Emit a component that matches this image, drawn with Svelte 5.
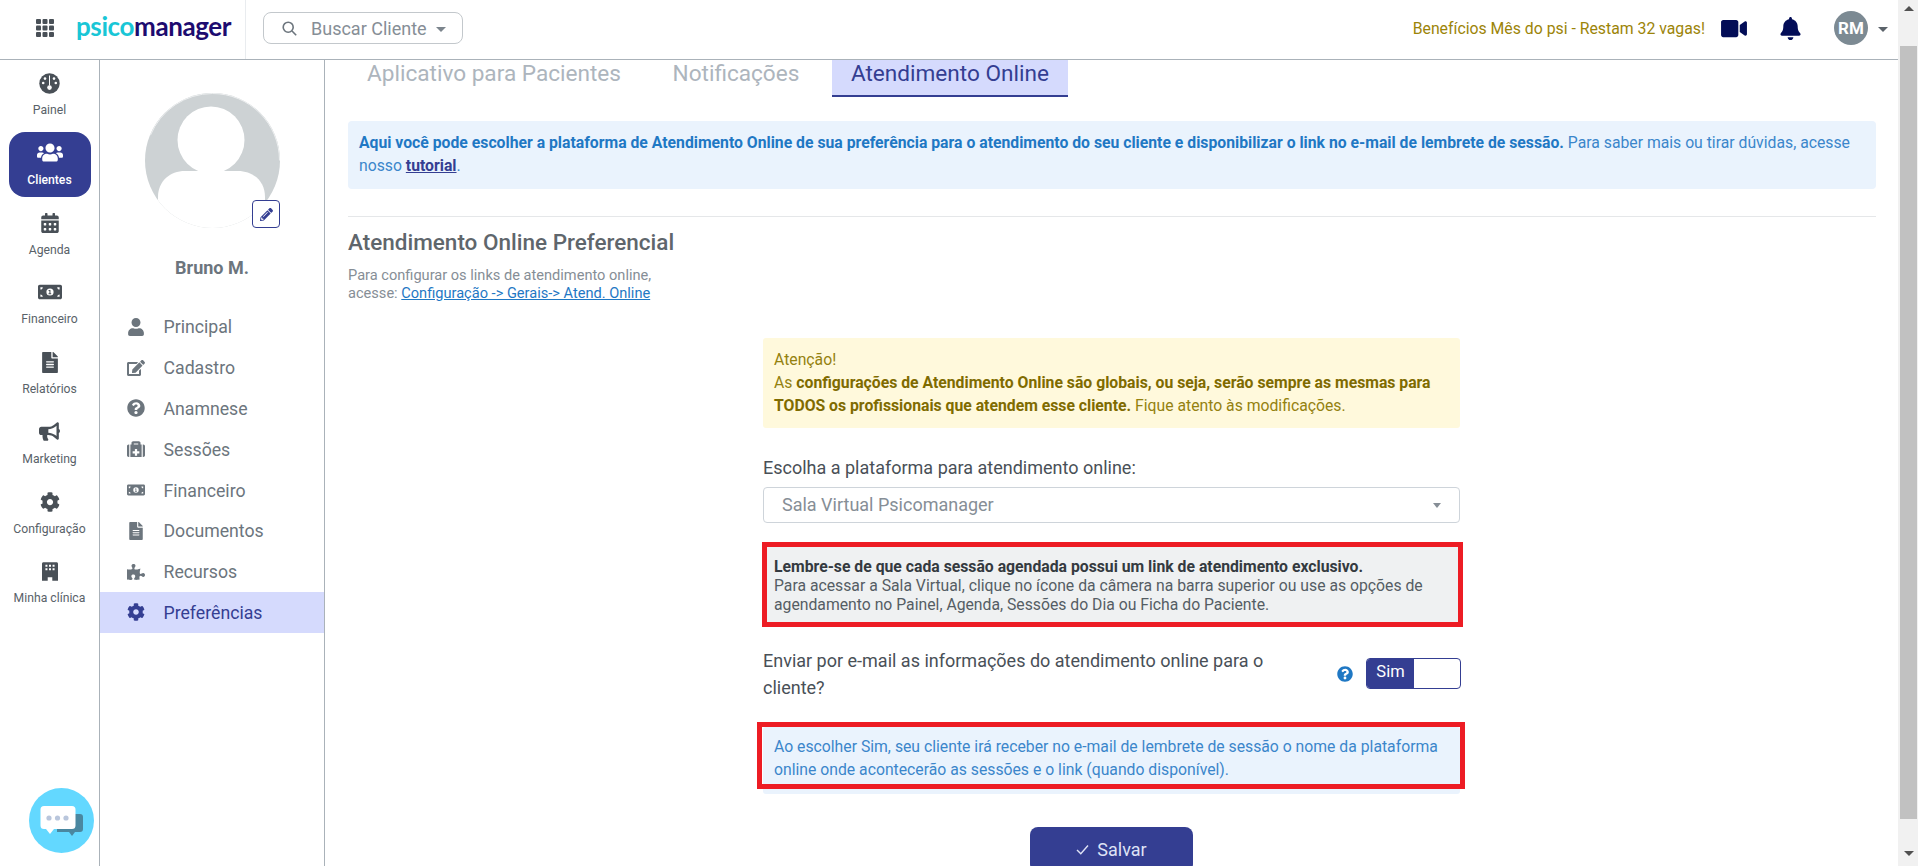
<script>
  const icons = {
    users: ['0 0 640 512', 'M96 224c35.3 0 64-28.7 64-64s-28.7-64-64-64-64 28.7-64 64 28.7 64 64 64zm448 0c35.3 0 64-28.7 64-64s-28.7-64-64-64-64 28.7-64 64 28.7 64 64 64zm32 32h-64c-17.6 0-33.5 7.1-45.1 18.6 40.3 22.1 68.9 62 75.1 109.4h66c17.7 0 32-14.3 32-32v-32c0-35.3-28.7-64-64-64zm-256 0c61.9 0 112-50.1 112-112S381.9 32 320 32 208 82.1 208 144s50.1 112 112 112zm76.8 32h-8.3c-20.8 10-43.9 16-68.5 16s-47.6-6-68.5-16h-8.3C179.6 288 128 339.6 128 403.2V432c0 26.5 21.5 48 48 48h288c26.5 0 48-21.5 48-48v-28.8c0-63.6-51.6-115.2-115.2-115.2zm-223.7-13.4C161.5 263.1 145.6 256 128 256H64c-35.3 0-64 28.7-64 64v32c0 17.7 14.3 32 32 32h65.9c6.3-47.4 34.9-87.3 75.2-109.4z'],
    calendar: ['0 0 448 512', 'M0 464c0 26.5 21.5 48 48 48h352c26.5 0 48-21.5 48-48V192H0v272zm320-196c0-6.6 5.4-12 12-12h40c6.6 0 12 5.4 12 12v40c0 6.6-5.4 12-12 12h-40c-6.6 0-12-5.4-12-12v-40zm0 128c0-6.6 5.4-12 12-12h40c6.6 0 12 5.4 12 12v40c0 6.6-5.4 12-12 12h-40c-6.6 0-12-5.4-12-12v-40zM192 268c0-6.6 5.4-12 12-12h40c6.6 0 12 5.4 12 12v40c0 6.6-5.4 12-12 12h-40c-6.6 0-12-5.4-12-12v-40zm0 128c0-6.6 5.4-12 12-12h40c6.6 0 12 5.4 12 12v40c0 6.6-5.4 12-12 12h-40c-6.6 0-12-5.4-12-12v-40zM64 268c0-6.6 5.4-12 12-12h40c6.6 0 12 5.4 12 12v40c0 6.6-5.4 12-12 12H76c-6.6 0-12-5.4-12-12v-40zm0 128c0-6.6 5.4-12 12-12h40c6.6 0 12 5.4 12 12v40c0 6.6-5.4 12-12 12H76c-6.6 0-12-5.4-12-12v-40zM400 64h-48V16c0-8.8-7.2-16-16-16h-32c-8.8 0-16 7.2-16 16v48H160V16c0-8.8-7.2-16-16-16h-32c-8.8 0-16 7.2-16 16v48H48C21.5 64 0 85.5 0 112v48h448v-48c0-26.5-21.5-48-48-48z'],
    file: ['0 0 384 512', 'M224 136V0H24C10.7 0 0 10.7 0 24v464c0 13.3 10.7 24 24 24h336c13.3 0 24-10.7 24-24V160H248c-13.2 0-24-10.8-24-24zm64 236c0 6.6-5.4 12-12 12H108c-6.6 0-12-5.4-12-12v-8c0-6.6 5.4-12 12-12h168c6.6 0 12 5.4 12 12v8zm0-64c0 6.6-5.4 12-12 12H108c-6.6 0-12-5.4-12-12v-8c0-6.6 5.4-12 12-12h168c6.6 0 12 5.4 12 12v8zm0-72v8c0 6.6-5.4 12-12 12H108c-6.6 0-12-5.4-12-12v-8c0-6.6 5.4-12 12-12h168c6.6 0 12 5.4 12 12zm96-114.1v6.1H256V0h6.1c6.4 0 12.5 2.5 17 7l97.9 98c4.5 4.5 7 10.6 7 16.9z'],
    cog: ['0 0 512 512', 'M487.4 315.7l-42.6-24.6c4.3-23.2 4.3-47 0-70.2l42.6-24.6c4.9-2.8 7.1-8.6 5.5-14-11.1-35.6-30-67.8-54.7-94.6-3.8-4.1-10-5.1-14.8-2.3L380.8 110c-17.9-15.4-38.5-27.3-60.8-35.1V25.8c0-5.6-3.9-10.5-9.4-11.7-36.7-8.2-74.3-7.8-109.2 0-5.5 1.2-9.4 6.1-9.4 11.7V75c-22.2 7.9-42.8 19.8-60.8 35.1L88.7 85.5c-4.9-2.8-11-1.9-14.8 2.3-24.7 26.7-43.6 58.9-54.7 94.6-1.7 5.4.6 11.2 5.5 14L67.3 221c-4.3 23.2-4.3 47 0 70.2l-42.6 24.6c-4.9 2.8-7.1 8.6-5.5 14 11.1 35.6 30 67.8 54.7 94.6 3.8 4.1 10 5.1 14.8 2.3l42.6-24.6c17.9 15.4 38.5 27.3 60.8 35.1v49.2c0 5.6 3.9 10.5 9.4 11.7 36.7 8.2 74.3 7.8 109.2 0 5.5-1.2 9.4-6.1 9.4-11.7v-49.2c22.2-7.9 42.8-19.8 60.8-35.1l42.6 24.6c4.9 2.8 11 1.9 14.8-2.3 24.7-26.7 43.6-58.9 54.7-94.6 1.5-5.5-.7-11.3-5.6-14.1zM256 336c-44.1 0-80-35.9-80-80s35.9-80 80-80 80 35.9 80 80-35.9 80-80 80z'],
    bullhorn: ['0 0 576 512', 'M576 240c0-23.63-12.95-44.04-32-55.12V32.01C544 23.26 537.02 0 512 0c-7.12 0-14.19 2.38-19.98 7.02l-85.03 68.03C364.28 109.19 310.66 128 256 128H64c-35.35 0-64 28.65-64 64v96c0 35.35 28.65 64 64 64h33.7c-1.39 10.48-2.18 21.14-2.18 32 0 39.77 9.26 77.35 25.56 110.94 5.19 10.69 16.52 17.06 28.4 17.06h74.28c26.05 0 41.69-29.84 25.9-50.56-16.4-21.52-26.15-48.36-26.15-77.44 0-11.11 1.62-21.79 4.41-32H256c54.66 0 108.28 18.81 150.98 52.95l85.03 68.03a32.023 32.023 0 0 0 19.98 7.02c24.92 0 32-22.78 32-32V295.13C563.05 284.04 576 263.63 576 240zm-96 141.42l-33.05-26.44C392.95 311.78 325.12 288 256 288v-96c69.12 0 136.95-23.78 190.95-66.98L480 98.58v282.84z'],
    user: ['0 0 448 512', 'M224 256c70.7 0 128-57.3 128-128S294.7 0 224 0 96 57.3 96 128s57.3 128 128 128zm89.6 32h-16.7c-22.2 10.2-46.9 16-72.9 16s-50.6-5.8-72.9-16h-16.7C60.2 288 0 348.2 0 422.4V464c0 26.5 21.5 48 48 48h352c26.5 0 48-21.5 48-48v-41.6c0-74.2-60.2-134.4-134.4-134.4z'],
    question: ['0 0 512 512', 'M504 256c0 136.997-111.043 248-248 248S8 392.997 8 256C8 119.083 119.043 8 256 8s248 111.083 248 248zM262.655 90c-54.497 0-89.255 22.957-116.549 63.758-3.536 5.286-2.353 12.415 2.715 16.258l34.699 26.31c5.205 3.947 12.621 3.008 16.665-2.122 17.864-22.658 30.113-35.797 57.303-35.797 20.429 0 45.698 13.148 45.698 32.958 0 14.976-12.363 22.667-32.534 33.976C247.128 238.528 216 254.941 216 296v4c0 6.627 5.373 12 12 12h56c6.627 0 12-5.373 12-12v-1.333c0-28.462 83.186-29.647 83.186-106.667 0-58.002-60.165-102-116.531-102zM256 338c-25.365 0-46 20.635-46 46 0 25.364 20.635 46 46 46s46-20.636 46-46c0-25.365-20.635-46-46-46z'],
    puzzle: ['0 0 576 512', 'M519.442 288.651c-41.519 0-59.5 31.593-82.058 31.593C377.409 320.244 432 144 432 144s-196.288 80-196.288-3.297c0-35.827 36.288-46.25 36.288-85.985C272 19.216 243.885 0 210.539 0c-34.654 0-66.366 18.891-66.366 56.346 0 41.364 31.711 59.277 31.711 81.75C175.885 207.719 0 166.758 0 166.758v333.237s178.635 41.047 178.635-28.662c0-22.473-40-40.107-40-81.471 0-37.456 29.25-56.346 63.577-56.346 33.673 0 61.788 19.216 61.788 54.717 0 39.735-36.288 50.158-36.288 85.985 0 60.803 129.675 25.73 181.23 25.73 0 0-34.725-120.101 25.827-120.101 35.962 0 46.423 36.152 86.308 36.152C556.712 416 576 387.99 576 354.443c0-34.199-18.962-65.792-56.558-65.792z'],
    bell: ['0 0 448 512', 'M224 512c35.32 0 63.97-28.65 63.97-64H160.03c0 35.35 28.65 64 63.97 64zm215.39-149.71c-19.32-20.76-55.47-51.99-55.47-154.29 0-77.7-54.48-139.9-127.94-155.16V32c0-17.67-14.32-32-31.98-32s-31.98 14.33-31.98 32v20.84C118.56 68.1 64.08 130.3 64.08 208c0 102.3-36.15 133.53-55.47 154.29-6 6.45-8.66 14.16-8.61 21.71.11 16.4 12.98 32 32.1 32h383.8c19.12 0 32-15.6 32.1-32 .05-7.55-2.61-15.27-8.61-21.71z'],
    video: ['0 0 576 512', 'M336.2 64H47.8C21.4 64 0 85.4 0 111.8v288.4C0 426.6 21.4 448 47.8 448h288.4c26.4 0 47.8-21.4 47.8-47.8V111.8c0-26.4-21.4-47.8-47.8-47.8zm189.4 37.7L416 177.3v157.4l109.6 75.5c21.2 14.6 50.4-.3 50.4-25.8V127.5c0-25.4-29.1-40.4-50.4-25.8z'],
    edit: ['0 0 576 512', 'M402.6 83.2l90.2 90.2c3.8 3.8 3.8 10 0 13.8L274.4 405.6l-92.8 10.3c-12.4 1.4-22.9-9.1-21.5-21.5l10.3-92.8L388.8 83.2c3.8-3.8 10-3.8 13.8 0zm162-22.9l-48.8-48.8c-15.2-15.2-39.9-15.2-55.2 0l-35.4 35.4c-3.8 3.8-3.8 10 0 13.8l90.2 90.2c3.8 3.8 10 3.8 13.8 0l35.4-35.4c15.2-15.3 15.2-40 0-55.2zM384 346.2V448H64V128h229.8c3.2 0 6.2-1.3 8.5-3.5l40-40c7.6-7.6 2.2-20.5-8.5-20.5H48C21.5 64 0 85.5 0 112v352c0 26.5 21.5 48 48 48h352c26.5 0 48-21.5 48-48V306.2c0-10.7-12.9-16-20.5-8.5l-40 40c-2.2 2.3-3.5 5.3-3.5 8.5z'],
    pencil: ['0 0 512 512', 'M497.9 142.1l-46.1 46.1c-4.7 4.7-12.3 4.7-17 0l-111-111c-4.7-4.7-4.7-12.3 0-17l46.1-46.1c18.7-18.7 49.1-18.7 67.9 0l60.1 60.1c18.8 18.7 18.8 49.1 0 67.9zM284.2 99.8L21.6 362.4.4 483.9c-2.9 16.4 11.4 30.6 27.8 27.8l121.5-21.3 262.6-262.6c4.7-4.7 4.7-12.3 0-17l-111-111c-4.8-4.7-12.4-4.7-17.1 0zM124.1 339.9c-5.5-5.5-5.5-14.3 0-19.8l154-154c5.5-5.5 14.3-5.5 19.8 0s5.5 14.3 0 19.8l-154 154c-5.5 5.5-14.3 5.5-19.8 0zM88 424h48v36.3l-64.5 11.3-31.1-31.1L51.7 376H88v48z'],
    medkit: ['0 0 512 512', 'M96 480h320V128h-32V80c0-26.51-21.49-48-48-48H176c-26.51 0-48 21.49-48 48v48H96v352zm96-384h128v32H192V96zm160 248v32c0 4.418-3.582 8-8 8h-56v56c0 4.418-3.582 8-8 8h-48c-4.418 0-8-3.582-8-8v-56h-56c-4.418 0-8-3.582-8-8v-48c0-4.418 3.582-8 8-8h56v-56c0-4.418 3.582-8 8-8h48c4.418 0 8 3.582 8 8v56h56c4.418 0 8 3.582 8 8zM512 176v256c0 26.51-21.49 48-48 48h-16V128h16c26.51 0 48 21.49 48 48zM64 480H48c-26.51 0-48-21.49-48-48V176c0-26.51 21.49-48 48-48h16v352z'],
    // desenhados a mao, sem equivalente direto
    money: ['0 0 640 512', 'M48 64h544c26 0 48 22 48 48v288c0 26-22 48-48 48H48c-26 0-48-22-48-48V112c0-26 22-48 48-48zM64 128v64c35 0 64-29 64-64zM512 128c0 35 29 64 64 64v-64zM64 320v64h64c0-35-29-64-64-64zM576 320c-35 0-64 29-64 64h64zM320 160a96 96 0 1 0 0 192 96 96 0 0 0 0-192zM304 200h28v88h20v28h-72v-28h24v-58h-24v-22z'],
    building: ['0 0 448 512', 'M40 0h368c22 0 40 18 40 40v472H288v-96h-128v96H0V40C0 18 18 0 40 0zM96 64v56h56V64zM196 64v56h56V64zM296 64v56h56V64zM96 164v56h56v-56zM196 164v56h56v-56zM296 164v56h56v-56z']
  };

  const rail = [
    { label: 'Painel', icon: 'gauge' },
    { label: 'Clientes', icon: 'users', active: true, w: 26, h: 21 },
    { label: 'Agenda', icon: 'calendar', w: 18, h: 20 },
    { label: 'Financeiro', icon: 'money', w: 24, h: 20 },
    { label: 'Relatórios', icon: 'file', w: 16, h: 21 },
    { label: 'Marketing', icon: 'bullhorn', w: 21, h: 19 },
    { label: 'Configuração', icon: 'cog', w: 20, h: 20 },
    { label: 'Minha clínica', icon: 'building', w: 16, h: 19 }
  ];

  const menu = [
    { label: 'Principal', icon: 'user', w: 18, h: 18 },
    { label: 'Cadastro', icon: 'edit', w: 18, h: 18 },
    { label: 'Anamnese', icon: 'question', w: 18, h: 18 },
    { label: 'Sessões', icon: 'medkit', w: 18, h: 18 },
    { label: 'Financeiro', icon: 'money', w: 18, h: 16 },
    { label: 'Documentos', icon: 'file', w: 14, h: 18 },
    { label: 'Recursos', icon: 'puzzle', w: 18, h: 18 },
    { label: 'Preferências', icon: 'cog', active: true, w: 18, h: 18 }
  ];
</script>

{#snippet icon(name, w, h)}
  <svg class="ico" width={w} height={h} viewBox={icons[name][0]} preserveAspectRatio="xMidYMid meet" aria-hidden="true">
    <path fill-rule="evenodd" d={icons[name][1]} />
  </svg>
{/snippet}

<div class="page">
  <div class="main">
    <header class="topbar">
      <div class="brand">
        <svg class="grid" width="18" height="18" viewBox="0 0 18 18" aria-hidden="true">
          {#each [0, 6.5, 13] as y}
            {#each [0, 6.5, 13] as x}
              <rect {x} {y} width="5" height="5" rx="1" />
            {/each}
          {/each}
        </svg>
        <span class="logo"><span class="psico">psico</span><span class="manager">manager</span></span>
      </div>
      <div class="search">
        <svg width="15" height="15" viewBox="0 0 15 15" fill="none" stroke="#6c757d" stroke-width="1.6" aria-hidden="true">
          <circle cx="6.2" cy="6.2" r="5" /><path d="M10 10l4.2 4.2" />
        </svg>
        <span class="search-text">Buscar Cliente</span>
        <span class="caret"></span>
      </div>
      <div class="top-right">
        <span class="promo">Benefícios Mês do psi - Restam 32 vagas!</span>
        <span class="top-video">{@render icon('video', 26, 23)}</span>
        <span class="top-bell">{@render icon('bell', 21, 23)}</span>
        <span class="avatar-small">RM</span>
        <span class="caret dark"></span>
      </div>
    </header>

    <div class="body">
      <nav class="rail">
        {#each rail as item}
          <div class="rail-item" class:active={item.active}>
            <span class="rail-icon">
              {#if item.icon === 'gauge'}
                <svg width="21" height="21" viewBox="0 0 21 21" aria-hidden="true">
                  <circle cx="10.5" cy="10.5" r="10.2" fill="#495057" />
                  <g fill="#fff">
                    <circle cx="4.2" cy="10" r="1.3" /><circle cx="6" cy="5.6" r="1.3" /><circle cx="15" cy="5.6" r="1.3" /><circle cx="16.8" cy="10" r="1.3" />
                    <rect x="10" y="2.5" width="1" height="10" /><circle cx="10.5" cy="14.6" r="2.3" />
                  </g>
                </svg>
              {:else}
                {@render icon(item.icon, item.w, item.h)}
              {/if}
            </span>
            <span class="rail-label">{item.label}</span>
          </div>
        {/each}
        <div class="chat">
          <svg width="65" height="65" viewBox="0 0 65 65" aria-hidden="true">
            <circle cx="32.5" cy="32.5" r="32.5" fill="#63d8ff" />
            <path d="M28 26h23a3 3 0 0 1 3 3v12a3 3 0 0 1-3 3h-5l-3 4-3-4H28z" fill="#4a87a0" />
            <path d="M15 18h28a3.500 3.500 0 0 1 3.500 3.500v16a3.500 3.500 0 0 1-3.500 3.500H25l-4 5-4-5h-2a3.500 3.500 0 0 1-3.500-3.500v-16A3.500 3.500 0 0 1 15 18z" fill="#fff" />
            <circle cx="20" cy="30" r="2.600" fill="#b9c6dc" /><circle cx="28.500" cy="30" r="2.600" fill="#b9c6dc" /><circle cx="37" cy="30" r="2.600" fill="#b9c6dc" />
          </svg>
        </div>
      </nav>

      <aside class="side">
        <div class="photo">
          <svg width="135" height="135" viewBox="0 0 135 135" aria-hidden="true">
            <defs><clipPath id="clip"><circle cx="67.5" cy="67.5" r="67.500" /></clipPath></defs>
            <circle cx="67.5" cy="67.5" r="67.500" fill="#cdd2d4" />
            <g clip-path="url(#clip)">
              <circle cx="66" cy="47" r="33.500" fill="#fff" />
              <path d="M13 104c0-16 12-26 27-26h53c15 0 27 10 27 26v31H13z" fill="#fff" />
            </g>
            <circle cx="67.5" cy="67.5" r="67" fill="none" stroke="#eef0f1" stroke-width="1" stroke-dasharray="0 236 190 20" />
          </svg>
          <span class="photo-edit">{@render icon('pencil', 13, 13)}</span>
        </div>
        <div class="name">Bruno M.</div>
        <ul class="menu">
          {#each menu as item}
            <li class:active={item.active}>
              <span class="menu-icon">{@render icon(item.icon, item.w, item.h)}</span>
              <span class="menu-label">{item.label}</span>
            </li>
          {/each}
        </ul>
      </aside>

      <main class="content">
        <div class="tabs">
          <span class="tab">Aplicativo para Pacientes</span>
          <span class="tab">Notificações</span>
          <span class="tab current">Atendimento Online</span>
        </div>

        <div class="intro">
          <b>Aqui você pode escolher a plataforma de Atendimento Online de sua preferência para o atendimento do seu cliente e disponibilizar o link no e-mail de lembrete de sessão.</b>
          Para saber mais ou tirar dúvidas, acesse nosso <a href="#tutorial">tutorial</a>.
        </div>

        <hr />

        <h2>Atendimento Online Preferencial</h2>
        <p class="hint">
          Para configurar os links de atendimento online,<br />
          acesse: <a href="#config">Configuração -&gt; Gerais-&gt; Atend. Online</a>
        </p>

        <section class="form">
          <div class="warn">
            Atenção!<br />
            As <b>configurações de Atendimento Online são globais, ou seja, serão sempre as mesmas para TODOS os profissionais que atendem esse cliente.</b> Fique atento às modificações.
          </div>

          <div class="field-label">Escolha a plataforma para atendimento online:</div>
          <div class="select">
            <span>Sala Virtual Psicomanager</span>
            <span class="caret small"></span>
          </div>

          <div class="note marked">
            <b>Lembre-se de que cada sessão agendada possui um link de atendimento exclusivo.</b><br />
            Para acessar a Sala Virtual, clique no ícone da câmera na barra superior ou use as opções de agendamento no Painel, Agenda, Sessões do Dia ou Ficha do Paciente.
          </div>

          <div class="send-row">
            <span class="send-text">Enviar por e-mail as informações do atendimento online para o cliente?</span>
            <span class="help">{@render icon('question', 16, 16)}</span>
            <div class="toggle"><span class="on">Sim</span><span class="off"></span></div>
          </div>

          <div class="info marked">
            Ao escolher Sim, seu cliente irá receber no e-mail de lembrete de sessão o nome da plataforma online onde acontecerão as sessões e o link (quando disponível).
          </div>

          <div class="actions">
            <button type="button">
              <svg width="13" height="11" viewBox="0 0 13 11" fill="none" stroke="#dfe3f5" stroke-width="1.400" aria-hidden="true"><path d="M1 6l3.800 3.800L12 1.500" /></svg>
              Salvar
            </button>
          </div>
        </section>
      </main>
    </div>
  </div>

  <div class="scrollbar">
    <span class="arrow up"></span>
    <div class="thumb"></div>
    <span class="arrow down"></span>
  </div>
</div>

<style>
  :global(body) {
    margin: 0;
    background: #fff;
  }

  .page {
    display: flex;
    height: 866px;
    overflow: hidden;
    font-family: Roboto, "Liberation Sans", sans-serif;
    color: #495057;
  }

  .main {
    flex: 1;
    min-width: 0;
    display: flex;
    flex-direction: column;
  }

  .ico {
    display: block;
    fill: currentColor;
  }

  /* barra superior */
  .topbar {
    height: 59px;
    flex: none;
    display: flex;
    align-items: center;
    border-bottom: 1px solid #aab2b9;
  }

  .brand {
    width: 246px;
    height: 100%;
    box-sizing: border-box;
    border-right: 1px solid #e9ecef;
    display: flex;
    align-items: center;
    padding: 0 0 3px 36px;
  }

  .grid {
    fill: #495057;
    margin-right: 22px;
  }

  .logo {
    font-family: Lato, sans-serif;
    font-weight: 700;
    font-size: 26px;
    letter-spacing: -0.4px;
    line-height: 1;
    margin-top: -4px;
  }

  .psico {
    color: #19c6d6;
  }

  .manager {
    color: #1d0b70;
  }

  .search {
    margin: 0 0 3px 17px;
    width: 200px;
    height: 32px;
    box-sizing: border-box;
    border: 1px solid #c3c8cc;
    border-radius: 8px;
    display: flex;
    align-items: center;
    padding-left: 18px;
    color: #868e96;
  }

  .search-text {
    font-size: 18px;
    margin-left: 14px;
    margin-right: 9px;
  }

  .caret {
    width: 0;
    height: 0;
    border-left: 5px solid transparent;
    border-right: 5px solid transparent;
    border-top: 5px solid #7c858d;
    margin-top: 2px;
  }

  .caret.dark {
    border-top-color: #5b636a;
  }

  .caret.small {
    border-left-width: 4.500px;
    border-right-width: 4.500px;
    border-top-width: 5.500px;
    border-top-color: #868e96;
  }

  .top-right {
    margin: 0 0 3px auto;
    display: flex;
    align-items: center;
    padding-right: 10px;
  }

  .promo {
    font-size: 15.800px;
    color: #9c8408;
  }

  .top-video,
  .top-bell {
    color: #030d57;
  }

  .top-video {
    margin-left: 16px;
  }

  .top-bell {
    margin-left: 33px;
  }

  .avatar-small {
    width: 34px;
    height: 34px;
    border-radius: 50%;
    background: #7c8a93;
    color: #fff;
    font-weight: 700;
    font-size: 17px;
    display: flex;
    align-items: center;
    justify-content: center;
    margin-left: 33px;
    margin-right: 10px;
  }

  .body {
    flex: 1;
    min-height: 0;
    display: flex;
  }

  /* menu principal */
  .rail {
    position: relative;
    width: 99px;
    flex: none;
    border-right: 1px solid #aab2b9;
    padding-top: 2px;
    display: flex;
    flex-direction: column;
    align-items: center;
    gap: 4.750px;
  }

  .rail-item {
    width: 82px;
    height: 65px;
    flex: none;
    border-radius: 16px;
    display: flex;
    flex-direction: column;
    align-items: center;
    color: #495057;
  }

  .rail-icon {
    height: 22px;
    margin-top: 10px;
    display: flex;
    align-items: center;
    justify-content: center;
  }

  .rail-label {
    font-size: 12.200px;
    line-height: 14px;
    margin-top: 9px;
    white-space: nowrap;
    color: #596269;
  }

  .rail-item.active {
    background: #343e92;
    color: #fff;
  }

  .rail-item.active .rail-label {
    color: #fff;
    font-weight: 500;
  }

  .chat {
    position: absolute;
    left: 29px;
    top: 728px;
    line-height: 0;
  }

  /* coluna do paciente */
  .side {
    width: 224px;
    flex: none;
    border-right: 1px solid #aab2b9;
    display: flex;
    flex-direction: column;
  }

  .photo {
    position: relative;
    width: 135px;
    height: 135px;
    margin: 33px 0 0 45px;
    line-height: 0;
  }

  .photo-edit {
    position: absolute;
    right: 0;
    bottom: 0;
    width: 26px;
    height: 26px;
    background: #fff;
    border: 1px solid #343e92;
    border-radius: 4px;
    color: #343e92;
    display: flex;
    align-items: center;
    justify-content: center;
  }

  .name {
    text-align: center;
    margin-top: 30px;
    font-size: 18px;
    line-height: 20px;
    font-weight: 700;
    color: #6c757d;
  }

  .menu {
    list-style: none;
    margin: 28.500px 0 0;
    padding: 0;
  }

  .menu li {
    height: 40.800px;
    display: flex;
    align-items: center;
    font-size: 17.700px;
    color: #6c757d;
  }

  .menu-icon {
    width: 20px;
    margin: 0 17.500px 0 26px;
    display: flex;
    justify-content: center;
  }

  .menu-label {
    padding-top: 1px;
  }

  .menu li.active {
    background: #d5dafd;
    color: #343e92;
  }

  /* conteudo */
  .content {
    flex: 1;
    min-width: 0;
    padding: 0 22px 0 23px;
  }

  .tabs {
    display: flex;
    gap: 13.500px;
    height: 37px;
  }

  .tab {
    padding: 0 19px;
    font-size: 22.600px;
    line-height: 28px;
    color: #adb5bd;
    box-sizing: border-box;
  }

  .tab.current {
    background: #d5dafd;
    color: #343e92;
    border-bottom: 2px solid #343e92;
  }

  .intro {
    margin-top: 24px;
    height: 68px;
    box-sizing: border-box;
    padding: 11px 11px;
    background: #eaf3fd;
    border-radius: 4px;
    font-size: 15.750px;
    line-height: 22.500px;
    color: #3b86cb;
  }

  .intro b {
    font-weight: 700;
    color: #1f78c4;
  }

  .intro a {
    font-weight: 700;
    color: #343e92;
  }

  hr {
    margin: 27px 0 0;
    border: 0;
    border-top: 1px solid #e5e7e9;
  }

  h2 {
    margin: 11px 0 0;
    font-size: 22.500px;
    line-height: 28px;
    font-weight: 500;
    color: #5f666c;
  }

  .hint {
    margin: 11px 0 0;
    font-size: 14.600px;
    line-height: 17.500px;
    color: #868e96;
  }

  .hint a {
    color: #1f78c4;
  }

  .form {
    width: 697px;
    margin: 36px 0 0 415px;
  }

  .warn {
    height: 90px;
    box-sizing: border-box;
    padding: 11px;
    background: #fff9dc;
    border-radius: 3px;
    font-size: 15.750px;
    line-height: 22.800px;
    color: #94810f;
  }

  .warn b {
    font-weight: 700;
    color: #7f6b00;
  }

  .field-label {
    margin-top: 28px;
    font-size: 18px;
    line-height: 24px;
    color: #495057;
  }

  .select {
    margin-top: 7px;
    height: 36px;
    box-sizing: border-box;
    border: 1px solid #ced4da;
    border-radius: 4px;
    display: flex;
    align-items: center;
    justify-content: space-between;
    padding: 0 18px 2px;
    font-size: 18px;
    color: #868e96;
  }

  .note {
    margin-top: 23px;
    height: 77px;
    box-sizing: border-box;
    padding: 11px 11px 0;
    background: #eff1f2;
    font-size: 15.750px;
    line-height: 19px;
    color: #555d64;
  }

  .note b {
    font-weight: 700;
    color: #343a40;
  }

  .marked {
    position: relative;
  }

  /* marcacao vermelha sobre o print */
  .marked::after {
    content: "";
    position: absolute;
    border: 5px solid #ed1c24;
    pointer-events: none;
  }

  .note.marked::after {
    inset: -4px -3px -4px -1px;
  }

  .info.marked::after {
    inset: -5px -5px 5px -6px;
  }

  .send-row {
    margin-top: 23.500px;
    display: flex;
    align-items: center;
  }

  .send-text {
    width: 520px;
    flex: none;
    font-size: 18px;
    line-height: 27px;
    color: #495057;
  }

  .help {
    color: #1f78c4;
    margin-left: auto;
  }

  .toggle {
    margin: 0 -1px 0 13px;
    width: 95px;
    height: 31px;
    box-sizing: border-box;
    border: 1px solid #343e92;
    border-radius: 4px;
    display: flex;
    overflow: hidden;
  }

  .on {
    width: 47px;
    background: #343e92;
    color: #fff;
    font-size: 16.500px;
    line-height: 26px;
    text-align: center;
  }

  .info {
    margin-top: 26.500px;
    height: 67px;
    box-sizing: border-box;
    padding: 7.500px 11px;
    background: #eaf3fd;
    border-radius: 3px;
    font-size: 15.750px;
    line-height: 23px;
    color: #3b86cb;
  }

  .actions {
    margin-top: 33px;
    display: flex;
    justify-content: center;
  }

  button {
    width: 163px;
    height: 45px;
    border: 0;
    border-radius: 8px;
    background: #343e92;
    color: #dfe3f5;
    font: 400 18px Roboto, sans-serif;
    display: flex;
    align-items: center;
    justify-content: center;
    gap: 8px;
  }

  /* barra de rolagem */
  .scrollbar {
    width: 20px;
    flex: none;
    background: #f1f1f1;
    box-sizing: border-box;
    padding: 0 1px 0 2px;
    display: flex;
    flex-direction: column;
    align-items: center;
  }

  .thumb {
    width: 100%;
    flex: 1;
    background: #c1c1c1;
    margin: 3px 0 32px;
  }

  .arrow {
    width: 0;
    height: 0;
    border-left: 5px solid transparent;
    border-right: 5px solid transparent;
    flex: none;
  }

  .arrow.up {
    border-bottom: 5px solid #505050;
    margin-top: 6px;
    margin-bottom: 32px;
  }

  .arrow.down {
    border-top: 5px solid #505050;
    margin-bottom: 10px;
  }
</style>
